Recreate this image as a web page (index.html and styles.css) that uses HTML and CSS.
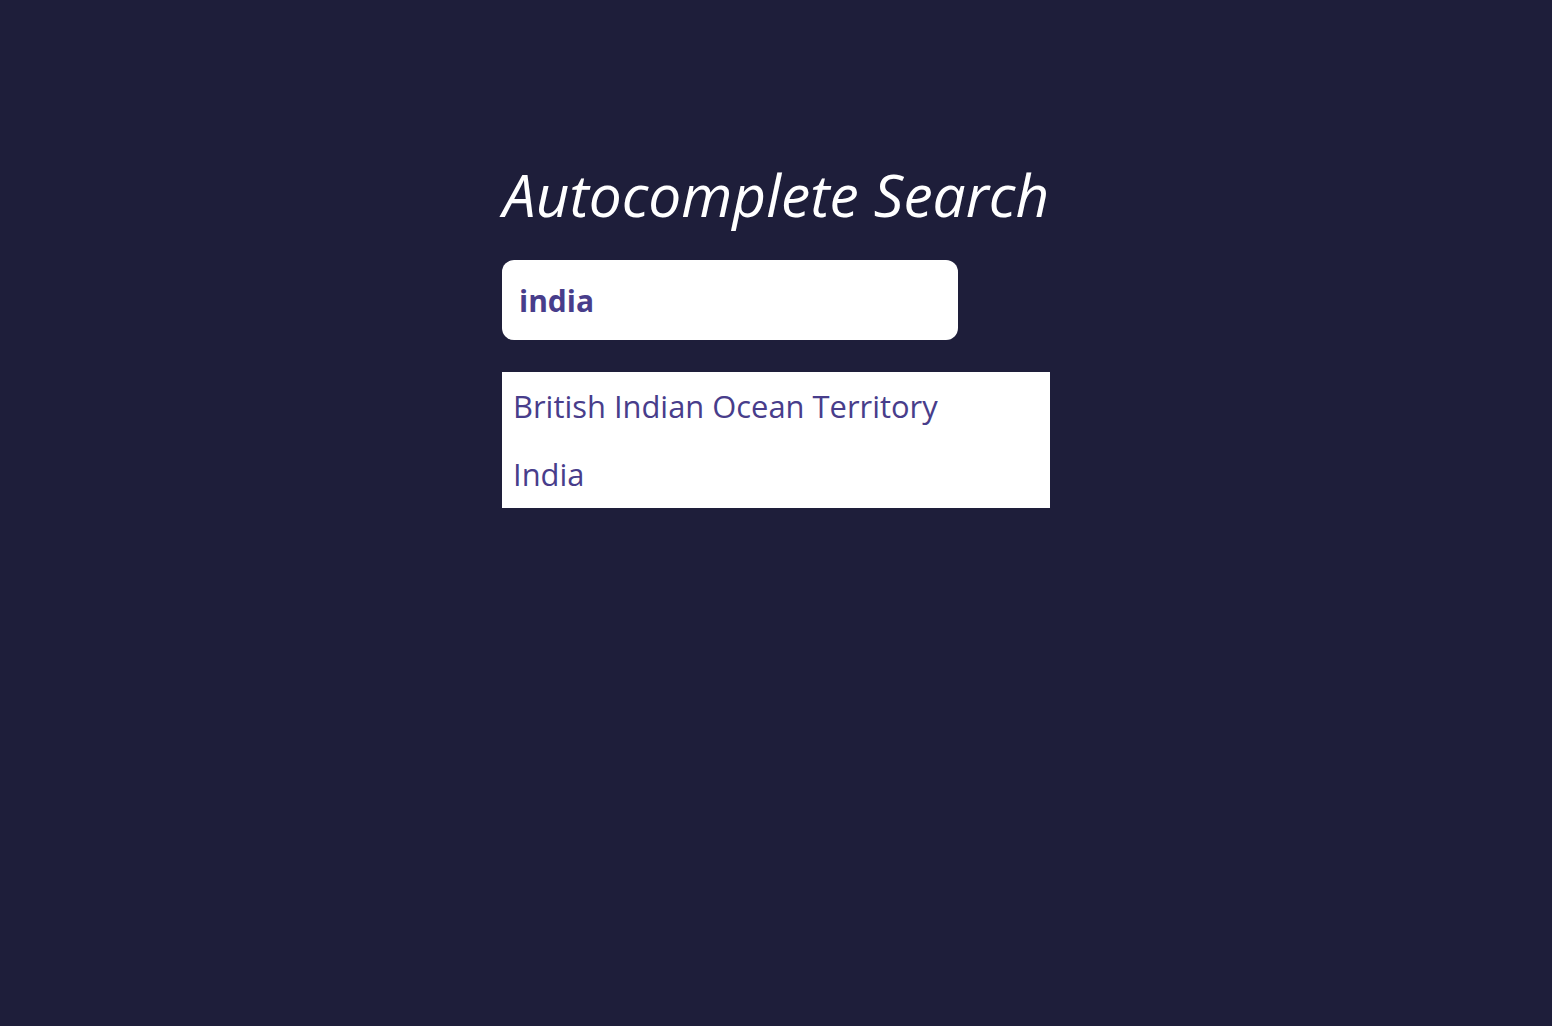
FILE: index.html
```html
<!DOCTYPE html>
<html lang="en">
<head>
<meta charset="utf-8">
<title>Autocomplete Search</title>
<link rel="stylesheet" href="styles.css">
</head>
<body>
<main class="container">
  <h1 class="title">Autocomplete Search</h1>
  <input class="search" type="text" value="india" aria-label="Search countries">
  <ul class="results">
    <li class="result">British Indian Ocean Territory</li>
    <li class="result">India</li>
  </ul>
</main>
</body>
</html>
```
FILE: styles.css
```css
* { box-sizing: border-box; }
html, body {
  margin: 0;
  padding: 0;
  background: #1e1e3a;
  height: 100%;
}
body {
  font-family: "Open Sans", "Noto Sans", sans-serif;
}
.container {
  width: 548px;
  margin: 0 auto;
  padding-top: 158px;
}
.title {
  margin: 0 0 30px;
  font-style: italic;
  font-weight: 400;
  font-size: 58.6px;
  line-height: 72px;
  color: #ffffff;
  text-align: center;
  white-space: nowrap;
}
.search {
  display: block;
  width: 456px;
  height: 80px;
  border: none;
  outline: none;
  border-radius: 12px;
  background: #ffffff;
  padding: 0 17px;
  font-family: inherit;
  font-weight: 700;
  font-size: 30px;
  color: #483d8b;
}
.results {
  list-style: none;
  margin: 32px 0 0;
  padding: 0;
  background: #ffffff;
}
.result {
  height: 68px;
  display: flex;
  align-items: center;
  padding: 0 11px;
  font-size: 30.9px;
  font-weight: 500;
  color: #483d8b;
}
```
